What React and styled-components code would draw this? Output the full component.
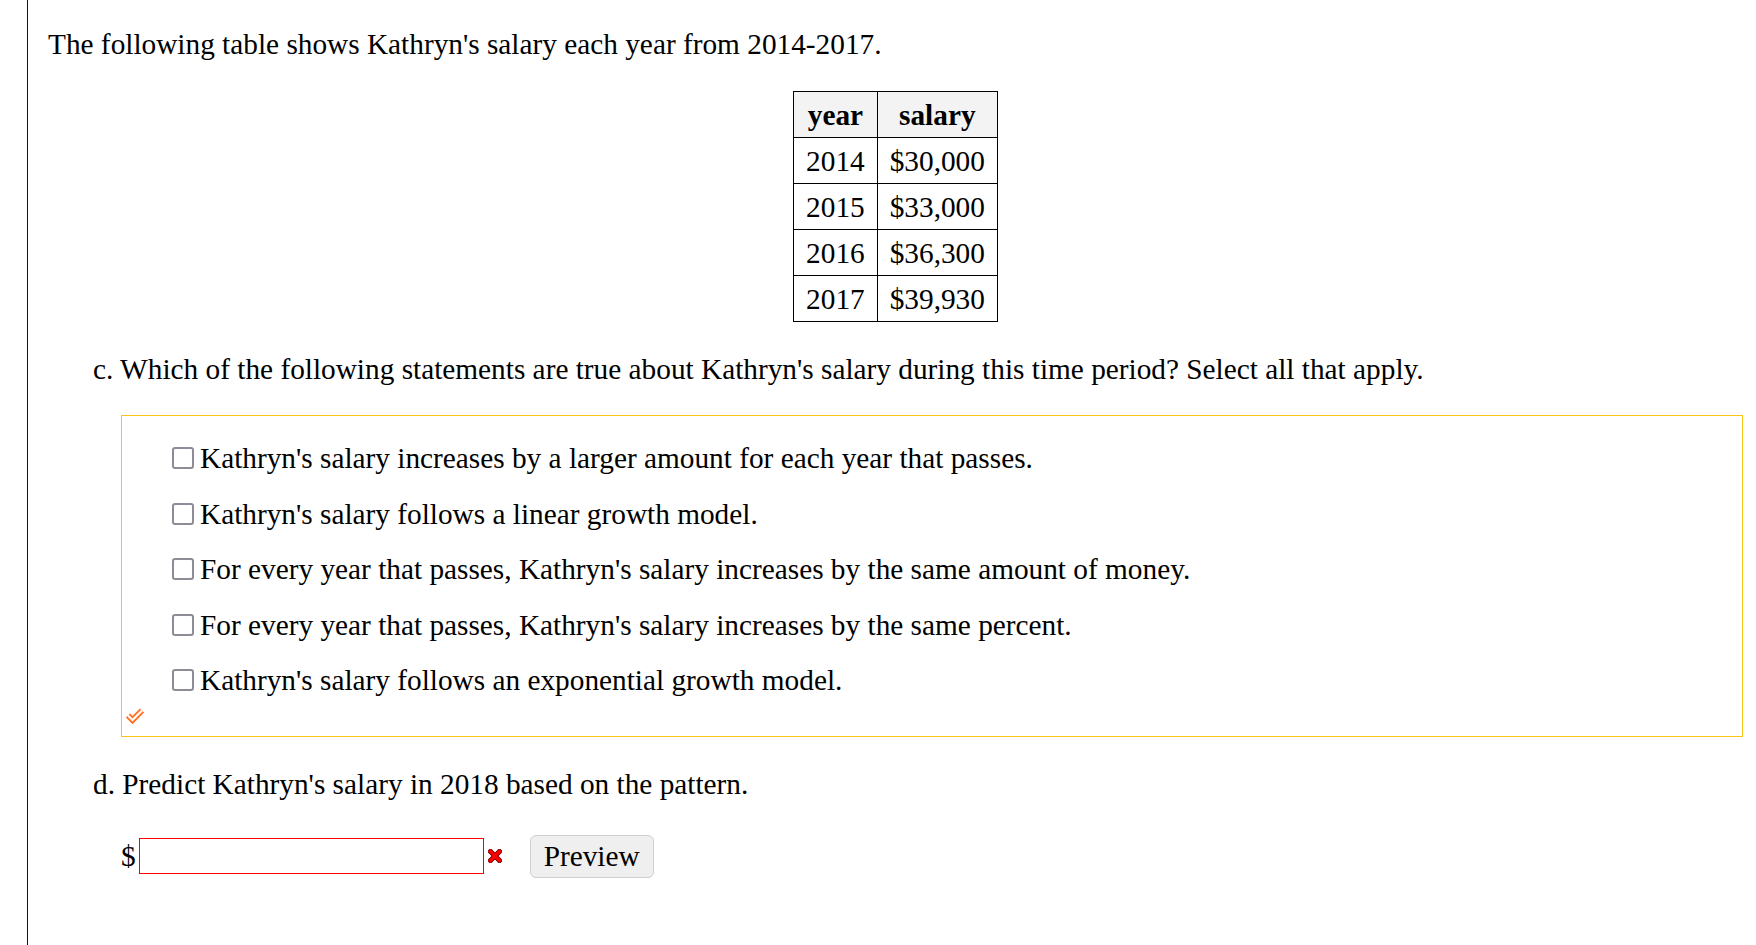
import React from "react";
import styled, { createGlobalStyle } from "styled-components";

const GlobalStyle = createGlobalStyle`
  html, body {
    margin: 0;
    padding: 0;
    background: #ffffff;
  }
  body {
    font-family: "Liberation Serif", "Times New Roman", serif;
    color: #000;
  }
`;

const rows = [
  ["2014", "$30,000"],
  ["2015", "$33,000"],
  ["2016", "$36,300"],
  ["2017", "$39,930"],
];

const options = [
  "Kathryn's salary increases by a larger amount for each year that passes.",
  "Kathryn's salary follows a linear growth model.",
  "For every year that passes, Kathryn's salary increases by the same amount of money.",
  "For every year that passes, Kathryn's salary increases by the same percent.",
  "Kathryn's salary follows an exponential growth model.",
];

export default function App() {
  return (
    <>
      <GlobalStyle />
      <Page>
        <Frame>
          <Intro>The following table shows Kathryn's salary each year from 2014-2017.</Intro>
          <TableWrap>
            <SalaryTable>
              <thead>
                <tr>
                  <th>year</th>
                  <th>salary</th>
                </tr>
              </thead>
              <tbody>
                {rows.map(([year, salary]) => (
                  <tr key={year}>
                    <td>{year}</td>
                    <td>{salary}</td>
                  </tr>
                ))}
              </tbody>
            </SalaryTable>
          </TableWrap>

          <Question $gap="30px">
            c. Which of the following statements are true about Kathryn's salary during this time period? Select all that apply.
          </Question>

          <AnswerBox>
            <OptionList>
              {options.map((text) => (
                <Option key={text}>
                  <Box />
                  <span>{text}</span>
                </Option>
              ))}
            </OptionList>
            <CheckMark width="20" height="17" viewBox="0 0 20 17">
              <path
                d="M3 8.5 L7.5 13 L17 3.5"
                fill="none"
                stroke="#ff6f1f"
                strokeWidth="6"
                strokeLinejoin="miter"
              />
              <path
                d="M3 8.5 L7.5 13 L17 3.5"
                fill="none"
                stroke="#ffffff"
                strokeWidth="2.2"
                strokeLinejoin="miter"
              />
            </CheckMark>
          </AnswerBox>

          <Question $gap="30px">d. Predict Kathryn's salary in 2018 based on the pattern.</Question>

          <AnswerRow>
            <Dollar>$</Dollar>
            <AnswerInput type="text" />
            <WrongMark width="14" height="14" viewBox="0 0 14 14">
              <path d="M2.5 2.5 L11.5 11.5 M11.5 2.5 L2.5 11.5" stroke="#5a0000" strokeWidth="5" strokeLinecap="square" />
              <path d="M2.5 2.5 L11.5 11.5 M11.5 2.5 L2.5 11.5" stroke="#ff0000" strokeWidth="3.4" strokeLinecap="square" />
            </WrongMark>
            <PreviewButton>Preview</PreviewButton>
          </AnswerRow>
        </Frame>
      </Page>
    </>
  );
}

const Page = styled.div`
  padding-left: 27px;
`;

const Frame = styled.div`
  border-left: 1px solid #0b0b60;
  min-height: 945px;
  box-sizing: border-box;
  padding: 27px 13px 40px 20px;
  font-size: 29.3px;
`;

const Intro = styled.p`
  margin: 0;
  line-height: 34px;
`;

const TableWrap = styled.div`
  display: flex;
  justify-content: center;
  margin-top: 30px;
`;

const SalaryTable = styled.table`
  border-collapse: collapse;
  font-size: 29.3px;

  th,
  td {
    border: 1px solid #000;
    padding: 0 12px;
    height: 45px;
    text-align: center;
    line-height: 32px;
  }

  th {
    background: #f3f3f3;
    font-weight: bold;
  }
`;

const Question = styled.p`
  margin: ${(p) => p.$gap || "28px"} 0 0 45px;
  line-height: 34px;
`;

const AnswerBox = styled.div`
  margin: 29px 0 0 73px;
  border: 1px solid #f7c61a;
  padding: 25px 0 12px 3px;
`;

const OptionList = styled.div`
  display: flex;
  flex-direction: column;
  gap: 21.5px;
  padding-left: 47px;
`;

const Option = styled.label`
  display: flex;
  align-items: center;
  gap: 6px;
  line-height: 34px;
`;

const Box = styled.span`
  width: 18px;
  height: 18px;
  border: 2px solid #8d8c97;
  border-radius: 3px;
  flex-shrink: 0;
`;

const CheckMark = styled.svg`
  display: block;
  margin-top: 10px;
`;

const AnswerRow = styled.div`
  display: flex;
  align-items: center;
  margin: 32px 0 0 73px;
`;

const Dollar = styled.span`
  line-height: 34px;
  margin-right: 3px;
`;

const AnswerInput = styled.input`
  width: 345px;
  height: 36px;
  box-sizing: border-box;
  border: 1px solid #ff0000;
  outline: none;
  font-family: inherit;
  font-size: 24px;
`;

const WrongMark = styled.svg`
  margin-left: 4px;
`;

const PreviewButton = styled.button`
  margin: 2px 0 0 28px;
  height: 43px;
  padding: 0 13px;
  font-family: "Liberation Serif", "Times New Roman", serif;
  font-size: 29.3px;
  color: #000;
  background: #efefef;
  border: 1px solid #cfcfcf;
  border-radius: 6px;
`;
